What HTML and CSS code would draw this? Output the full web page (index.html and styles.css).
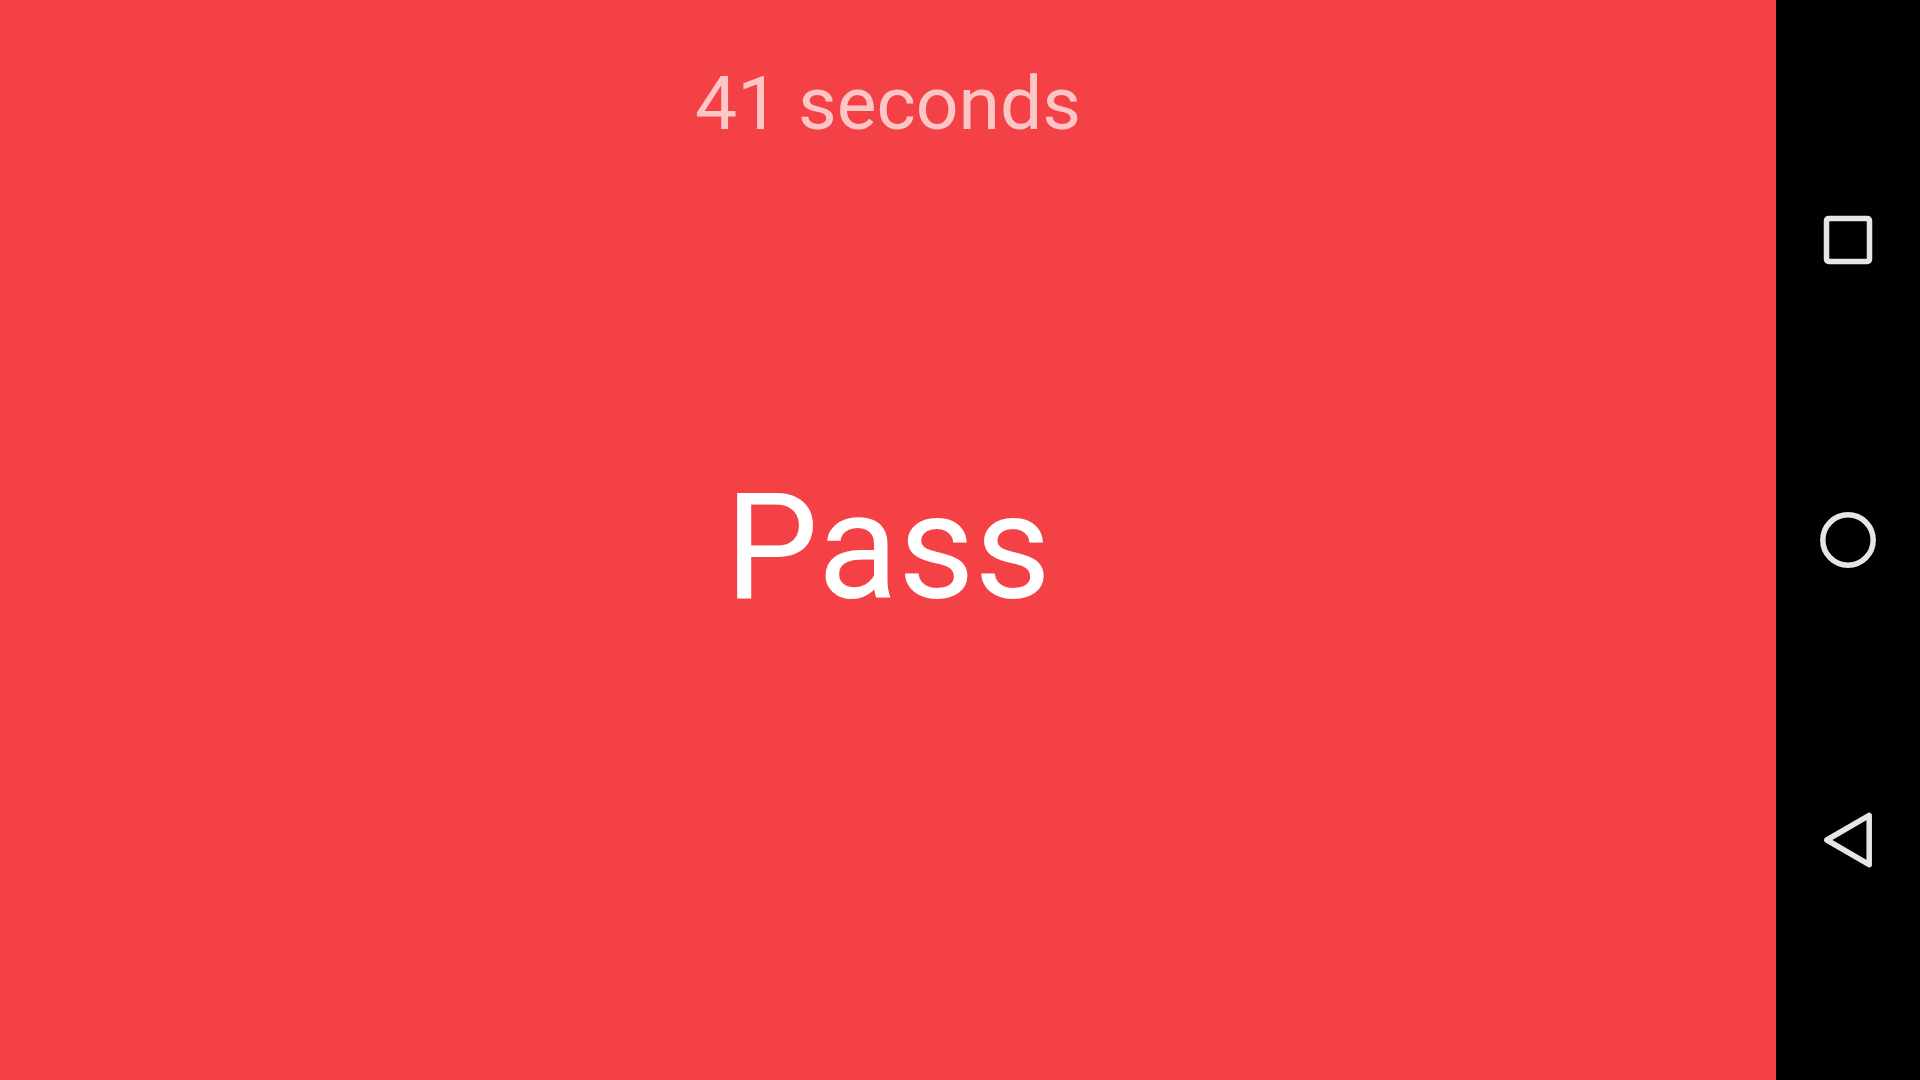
FILE: index.html
```html
<!DOCTYPE html>
<html lang="en">
<head>
<meta charset="utf-8">
<title>Pass</title>
<link rel="stylesheet" href="styles.css">
</head>
<body>
<div class="screen">
  <main class="stage">
    <div class="timer">41 seconds</div>
    <div class="result">Pass</div>
    <div class="spacer"></div>
  </main>
  <nav class="navbar">
    <div class="nav-slot">
      <svg class="nav-icon" viewBox="0 0 60 60" width="60" height="60"><rect x="8.5" y="8.5" width="43" height="43" rx="2" ry="2"/></svg>
    </div>
    <div class="nav-slot">
      <svg class="nav-icon" viewBox="0 0 60 60" width="60" height="60"><circle cx="30" cy="30" r="25.2"/></svg>
    </div>
    <div class="nav-slot">
      <svg class="nav-icon" viewBox="0 0 60 60" width="60" height="60"><polygon points="8.8,30 51.2,5.3 51.2,54.7"/></svg>
    </div>
  </nav>
</div>
</body>
</html>
```

FILE: styles.css
```css
html, body {
  margin: 0;
  padding: 0;
  width: 1920px;
  height: 1080px;
  overflow: hidden;
}

.screen {
  display: flex;
  width: 1920px;
  height: 1080px;
  font-family: Roboto, "Noto Sans", sans-serif;
}

.stage {
  flex: 0 0 1776px;
  background: #f44145;
  display: grid;
  grid-template-rows: 1fr auto 1fr;
  justify-items: center;
}

.timer {
  align-self: start;
  padding-top: 59px;
  font-size: 75px;
  line-height: normal;
  color: rgba(255, 255, 255, 0.7);
}

.result {
  padding-top: 14px;
  font-size: 148px;
  line-height: normal;
  color: #ffffff;
}

.navbar {
  flex: 0 0 144px;
  background: #000000;
  display: flex;
  flex-direction: column;
  justify-content: center;
  align-items: center;
}

.nav-slot {
  height: 300px;
  display: flex;
  align-items: center;
  justify-content: center;
}

.nav-icon {
  display: block;
  fill: none;
  stroke: #e6e6e6;
  stroke-width: 5.5;
  stroke-linejoin: round;
}
```
